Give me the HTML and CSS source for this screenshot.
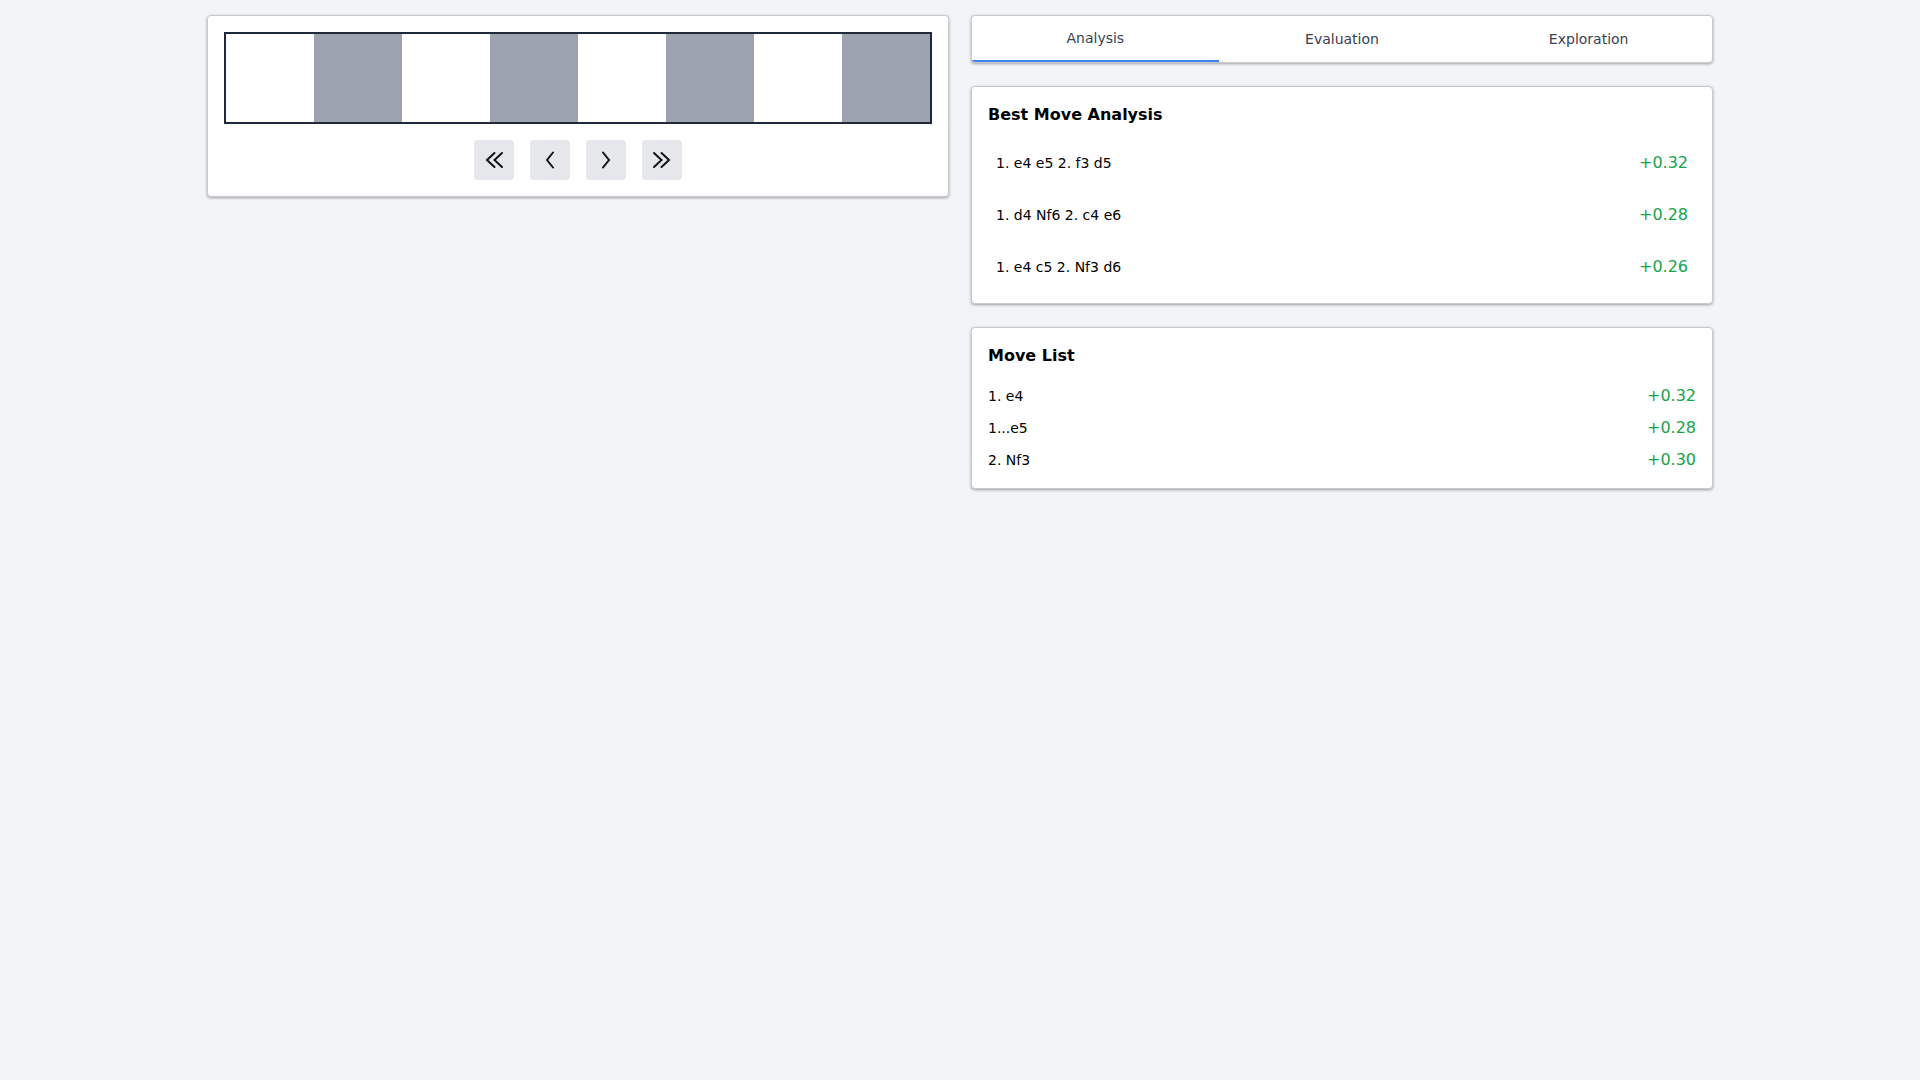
FILE: index.html
```html
<!DOCTYPE html>
<html lang="en">
<head>
    <meta charset="UTF-8">
    <meta name="viewport" content="width=device-width, initial-scale=1.0">
    <title>Chess Analysis</title>
    <link rel="stylesheet" href="styles.css">
</head>
<body>
    <div class="layout">
        <div class="column">
            <div class="card board-card">
                <div class="board-strip">
                    <div class="square light"></div>
                    <div class="square dark"></div>
                    <div class="square light"></div>
                    <div class="square dark"></div>
                    <div class="square light"></div>
                    <div class="square dark"></div>
                    <div class="square light"></div>
                    <div class="square dark"></div>
                </div>
                <div class="nav-buttons">
                    <button class="nav-btn" title="First move">
                        <svg width="20" height="20" viewBox="0 0 20 20"><path d="M10.5 3 L3 10 L10.5 17 M18 3 L10.5 10 L18 17"/></svg>
                    </button>
                    <button class="nav-btn" title="Previous move">
                        <svg width="20" height="20" viewBox="0 0 20 20"><path d="M13 2.5 L7 10 L13 17.5"/></svg>
                    </button>
                    <button class="nav-btn" title="Next move">
                        <svg width="20" height="20" viewBox="0 0 20 20"><path d="M7 2.5 L13 10 L7 17.5"/></svg>
                    </button>
                    <button class="nav-btn" title="Last move">
                        <svg width="20" height="20" viewBox="0 0 20 20"><path d="M2 3 L9.5 10 L2 17 M9.5 3 L17 10 L9.5 17"/></svg>
                    </button>
                </div>
            </div>
        </div>

        <div class="column">
            <div class="card tabs">
                <button class="tab active">Analysis</button>
                <button class="tab">Evaluation</button>
                <button class="tab">Exploration</button>
            </div>

            <div class="card panel">
                <h2 class="panel-title">Best Move Analysis</h2>
                <div class="line-list">
                    <div class="line-row">
                        <span class="moves">1. e4 e5 2. f3 d5</span>
                        <span class="score">+0.32</span>
                    </div>
                    <div class="line-row">
                        <span class="moves">1. d4 Nf6 2. c4 e6</span>
                        <span class="score">+0.28</span>
                    </div>
                    <div class="line-row">
                        <span class="moves">1. e4 c5 2. Nf3 d6</span>
                        <span class="score">+0.26</span>
                    </div>
                </div>
            </div>

            <div class="card panel">
                <h2 class="panel-title">Move List</h2>
                <div class="move-list">
                    <div class="move-row">
                        <span class="moves">1. e4</span>
                        <span class="score">+0.32</span>
                    </div>
                    <div class="move-row">
                        <span class="moves">1...e5</span>
                        <span class="score">+0.28</span>
                    </div>
                    <div class="move-row">
                        <span class="moves">2. Nf3</span>
                        <span class="score">+0.30</span>
                    </div>
                </div>
            </div>
        </div>
    </div>
</body>
</html>
```

FILE: styles.css
```css
body {
    margin: 0;
    font-family: "DejaVu Sans", sans-serif;
    background-color: #f3f4f6;
    color: #111;
}
.layout {
    max-width: 1506px;
    margin: 0 auto;
    padding: 15px 16px;
    display: grid;
    grid-template-columns: 1fr 1fr;
    gap: 22px;
    align-items: start;
}
.column {
    display: flex;
    flex-direction: column;
    gap: 23px;
}
.card {
    background: white;
    border: 1px solid #c8cacf;
    border-radius: 4px;
    box-shadow: 0 1px 3px rgba(0,0,0,0.35);
}
.board-card {
    padding: 16px;
}
.board-strip {
    display: grid;
    grid-template-columns: repeat(8, 1fr);
    border: 2px solid #1f2937;
}
.square {
    aspect-ratio: 1 / 1;
}
.square.light {
    background: white;
}
.square.dark {
    background: #9ca3af;
}
.nav-buttons {
    display: flex;
    justify-content: center;
    gap: 16px;
    margin-top: 16px;
}
.nav-btn {
    width: 40px;
    height: 40px;
    padding: 0;
    border: none;
    border-radius: 4px;
    background: #e5e7eb;
    display: flex;
    align-items: center;
    justify-content: center;
    cursor: pointer;
}
.nav-btn svg path {
    fill: none;
    stroke: #111;
    stroke-width: 2;
    stroke-linecap: round;
    stroke-linejoin: miter;
}
.tabs {
    display: flex;
    overflow: hidden;
}
.tab {
    flex: 1;
    padding: 12px;
    border: none;
    background: none;
    font-family: inherit;
    font-size: 14px;
    line-height: 20px;
    color: #374151;
    cursor: pointer;
}
.tab.active {
    border-bottom: 2px solid #3b82f6;
}
.panel {
    padding: 16px;
}
.panel-title {
    margin: 0 0 16px;
    font-size: 16px;
    line-height: 24px;
    font-weight: bold;
    color: #000;
}
.line-list {
    display: flex;
    flex-direction: column;
    gap: 12px;
}
.line-row {
    display: flex;
    justify-content: space-between;
    align-items: center;
    padding: 8px;
}
.move-list {
    display: flex;
    flex-direction: column;
    gap: 8px;
}
.move-row {
    display: flex;
    justify-content: space-between;
    align-items: center;
}
.moves {
    font-size: 14px;
    color: #000;
}
.score {
    font-size: 16px;
    line-height: 24px;
    color: #16a34a;
}
```
